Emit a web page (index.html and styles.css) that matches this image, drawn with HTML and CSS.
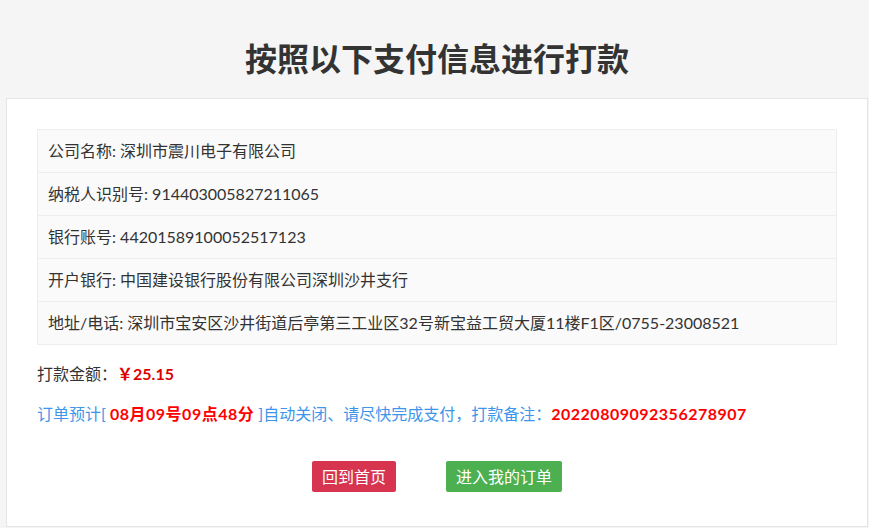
FILE: index.html
```html
<!DOCTYPE html>
<html lang="zh-CN">
<head>
    <meta charset="UTF-8">
    <title>付款信息</title>
    <link rel="stylesheet" href="styles.css">
</head>
<body>
    <h1 class="page-title">按照以下支付信息进行打款</h1>
    <div class="pay-panel">
        <table class="pay-table">
            <tr><td>公司名称: 深圳市震川电子有限公司</td></tr>
            <tr><td>纳税人识别号: 914403005827211065</td></tr>
            <tr><td>银行账号: 44201589100052517123</td></tr>
            <tr><td>开户银行: 中国建设银行股份有限公司深圳沙井支行</td></tr>
            <tr><td>地址/电话: 深圳市宝安区沙井街道后亭第三工业区32号新宝益工贸大厦11楼F1区/0755-23008521</td></tr>
        </table>
        <p class="pay-amount">打款金额：<span class="amount">￥25.15</span></p>
        <p class="pay-notice">订单预计[ <b class="hl">08月09号09点48分</b> ]自动关闭、请尽快完成支付，打款备注：<b class="hl">20220809092356278907</b></p>
        <div class="pay-actions">
            <a href="#" class="btn btn-red">回到首页</a>
            <a href="#" class="btn btn-green">进入我的订单</a>
        </div>
    </div>
</body>
</html>
```

FILE: styles.css
```css
body {
    margin: 0;
    padding: 0 1px 2px 6px;
    background: #f5f5f5;
    font-family: Lato, "Noto Sans CJK SC", sans-serif;
    color: #333;
}
.page-title {
    margin: 0;
    padding: 35px 0 19px;
    font-family: "Noto Sans CJK SC", sans-serif;
    font-size: 32px;
    line-height: 44px;
    font-weight: bold;
    text-align: center;
    color: #333;
}
.pay-panel {
    background: #fff;
    border: 1px solid #e5e5e5;
    padding: 30px 30px 34px;
}
.pay-table {
    width: 100%;
    border-collapse: collapse;
    background: #fafafa;
}
.pay-table td {
    border: 1px solid #eee;
    padding: 10px;
    font-size: 16px;
    line-height: 22px;
}
.pay-amount,
.pay-notice {
    margin: 16px 0 0;
    font-size: 16px;
    line-height: 24px;
}
.pay-amount {
    margin-top: 17px;
}
.amount {
    color: #d00;
    font-weight: bold;
}
.pay-notice {
    color: #3d96ea;
}
.pay-notice .hl {
    color: #f00;
    letter-spacing: 0.5px;
}
.pay-actions {
    display: flex;
    justify-content: center;
    gap: 50px;
    margin-top: 35px;
}
.btn {
    display: inline-block;
    padding: 4px 10px;
    font-family: "Noto Sans CJK SC", sans-serif;
    font-size: 16px;
    line-height: 23px;
    color: #fff;
    text-decoration: none;
    border-radius: 2px;
}
.btn-red {
    background: #d7354f;
}
.btn-green {
    background: #4caf50;
}
```
